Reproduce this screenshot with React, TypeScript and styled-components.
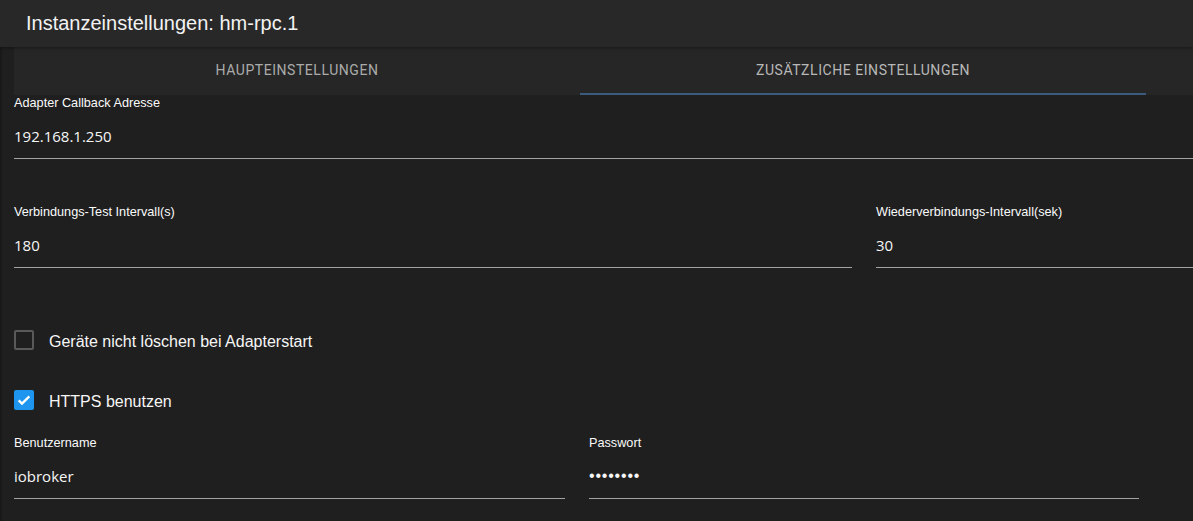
import styled, { createGlobalStyle } from "styled-components";

const GlobalStyle = createGlobalStyle`
    html, body {
        margin: 0;
        padding: 0;
        background: #1f1f1f;
        overflow: hidden;
    }
    * {
        box-sizing: border-box;
    }
`;

type FieldProps = {
    label: string;
    value: string;
    width?: string;
    secret?: boolean;
};

const Field = ({ label, value, width, secret }: FieldProps) => (
    <FieldBox $width={width}>
        <Label>{label}</Label>
        <Value $secret={secret}>{value}</Value>
    </FieldBox>
);

const Check = ({ checked, label }: { checked: boolean; label: string }) => (
    <CheckRow>
        <Box $checked={checked}>
            {checked && (
                <svg width="16" height="16" viewBox="0 0 24 24">
                    <path
                        d="M4 12.5l5 5L20 6.5"
                        fill="none"
                        stroke="#fff"
                        strokeWidth="3.4"
                    />
                </svg>
            )}
        </Box>
        <CheckLabel>{label}</CheckLabel>
    </CheckRow>
);

const App = () => {
    return (
        <Page>
            <GlobalStyle />
            <Header>Instanzeinstellungen: hm-rpc.1</Header>
            <Body>
                <Tabs>
                    <Tab>Haupteinstellungen</Tab>
                    <Tab $active>Zusätzliche Einstellungen</Tab>
                </Tabs>
                <Form>
                    <Field label="Adapter Callback Adresse" value="192.168.1.250" />
                    <Row $top={45}>
                        <Field label="Verbindungs-Test Intervall(s)" value="180" width="838px" />
                        <Field label="Wiederverbindungs-Intervall(sek)" value="30" />
                    </Row>
                    <Checks>
                        <Check checked={false} label="Geräte nicht löschen bei Adapterstart" />
                        <Check checked label="HTTPS benutzen" />
                    </Checks>
                    <Row $top={25}>
                        <Field label="Benutzername" value="iobroker" width="551px" />
                        <Field label="Passwort" value="••••••••" width="550px" secret />
                    </Row>
                </Form>
            </Body>
        </Page>
    );
};

export default App;

const Page = styled.div`
    width: 100vw;
    height: 100vh;
    display: flex;
    flex-direction: column;
    background: #1f1f1f;
    font-family: "Liberation Sans", Arial, sans-serif;
    color: #fff;
`;
const Header = styled.div`
    height: 47px;
    flex-shrink: 0;
    display: flex;
    align-items: center;
    padding-left: 26px;
    padding-bottom: 1px;
    background: #282828;
    font-size: 20px;
    color: #f2f2f2;
    box-shadow: 0 1px 3px rgba(0, 0, 0, 0.35);
    position: relative;
    z-index: 1;
`;
const Body = styled.div`
    flex: 1;
    border-left: 2px solid #191919;
    padding-left: 12px;
    display: flex;
    flex-direction: column;
`;

/* tabs */
const Tabs = styled.div`
    height: 48px;
    display: flex;
    background: #262626;
`;
const Tab = styled.div<{ $active?: boolean }>`
    width: 566px;
    display: flex;
    align-items: center;
    justify-content: center;
    padding-bottom: 1px;
    font-family: Roboto, "Liberation Sans", sans-serif;
    font-size: 14px;
    letter-spacing: 0.55px;
    text-transform: uppercase;
    color: ${(p) => (p.$active ? "#b8b8b8" : "#ababab")};
    border-bottom: 2px solid ${(p) => (p.$active ? "#3b5b7c" : "transparent")};
`;

/* form */
const Form = styled.div`
    display: flex;
    flex-direction: column;
`;
const Row = styled.div<{ $top: number }>`
    display: flex;
    gap: 24px;
    margin-top: ${(p) => p.$top}px;
`;
const FieldBox = styled.div<{ $width?: string }>`
    display: flex;
    flex-direction: column;
    ${(p) => (p.$width ? `width: ${p.$width}; flex-shrink: 0;` : "flex: 1;")}
`;
const Label = styled.div`
    height: 16px;
    line-height: 16px;
    font-size: 12.7px;
    color: #fafafa;
`;
const Value = styled.div<{ $secret?: boolean }>`
    height: 48px;
    padding-top: 15px;
    line-height: 20px;
    font-family: ${(p) =>
        p.$secret ? `"Liberation Sans", sans-serif` : `"Open Sans", "Liberation Sans", sans-serif`};
    font-size: ${(p) => (p.$secret ? "16px" : "15px")};
    letter-spacing: ${(p) => (p.$secret ? "0.8px" : "0")};
    color: #f6f6f6;
    border-bottom: 1px solid #a3a3a3;
`;
const Checks = styled.div`
    display: flex;
    flex-direction: column;
    gap: 40px;
    margin-top: 62px;
`;
const CheckRow = styled.div`
    display: flex;
    align-items: center;
    height: 20px;
    gap: 15px;
`;
const Box = styled.div<{ $checked: boolean }>`
    width: 20px;
    height: 20px;
    border-radius: 2px;
    display: flex;
    align-items: center;
    justify-content: center;
    background: ${(p) => (p.$checked ? "#1e96f0" : "transparent")};
    border: ${(p) => (p.$checked ? "none" : "2px solid #595959")};
`;
const CheckLabel = styled.div`
    font-size: 16px;
    color: #f6f6f6;
    padding-top: 3px;
`;
